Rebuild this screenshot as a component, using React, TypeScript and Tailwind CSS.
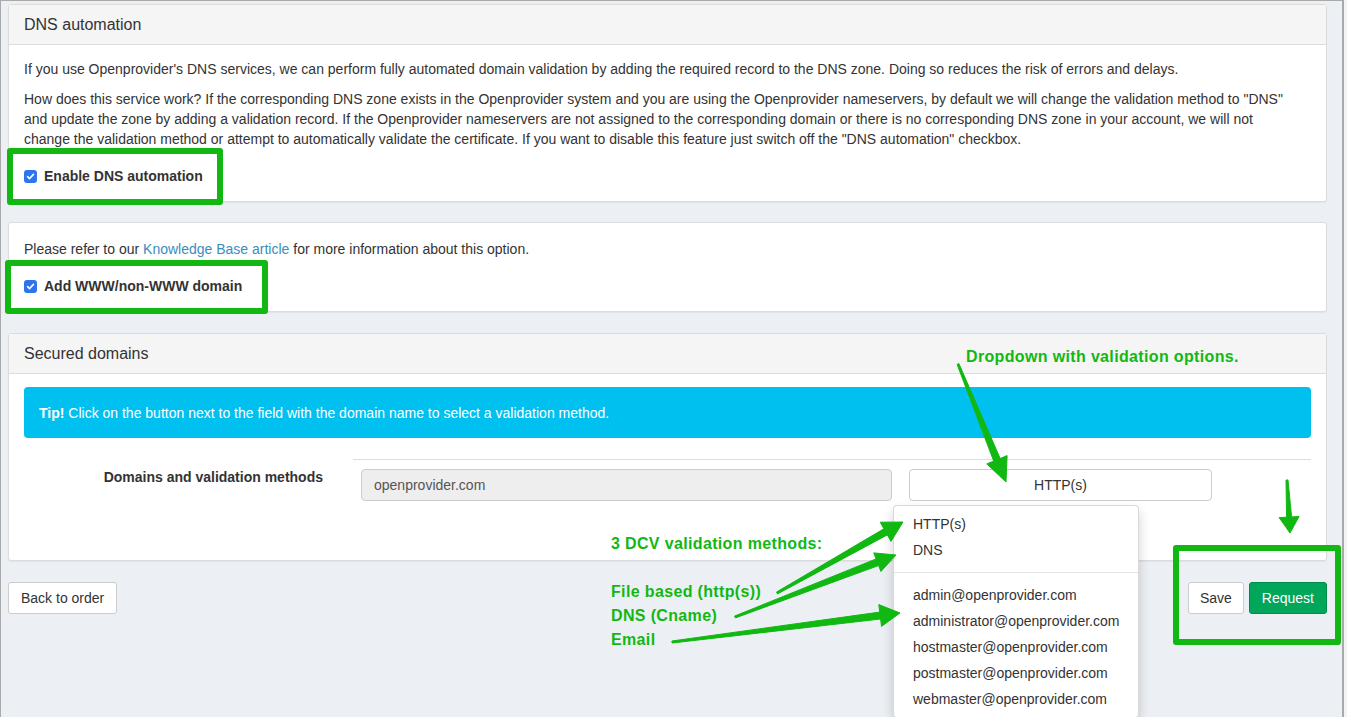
import React from "react";

const GREEN = "#12b812";

function Check() {
  return (
    <span className="inline-flex h-[13px] w-[13px] shrink-0 items-center justify-center rounded-[3px] bg-[#2f74ef]">
      <svg width="9" height="9" viewBox="0 0 10 10" fill="none">
        <path d="M1.8 5.2 L4 7.3 L8.3 2.6" stroke="white" strokeWidth="1.8" strokeLinecap="round" strokeLinejoin="round" />
      </svg>
    </span>
  );
}

type Arrow = { x1: number; y1: number; x2: number; y2: number; len: number; head: number; w1: number; w2: number };

function arrowPoints(a: Arrow) {
  const dx = a.x2 - a.x1;
  const dy = a.y2 - a.y1;
  const d = Math.hypot(dx, dy);
  const ux = dx / d;
  const uy = dy / d;
  const nx = -uy;
  const ny = ux;
  const bx = a.x2 - ux * a.len;
  const by = a.y2 - uy * a.len;
  const p = (x: number, y: number) => `${x.toFixed(1)},${y.toFixed(1)}`;
  return [
    p(a.x1 + (nx * a.w1) / 2, a.y1 + (ny * a.w1) / 2),
    p(bx + (nx * a.w2) / 2, by + (ny * a.w2) / 2),
    p(bx + (nx * a.head) / 2, by + (ny * a.head) / 2),
    p(a.x2, a.y2),
    p(bx - (nx * a.head) / 2, by - (ny * a.head) / 2),
    p(bx - (nx * a.w2) / 2, by - (ny * a.w2) / 2),
    p(a.x1 - (nx * a.w1) / 2, a.y1 - (ny * a.w1) / 2),
  ].join(" ");
}

const arrows: Arrow[] = [
  { x1: 958, y1: 364, x2: 1006, y2: 482, len: 24, head: 22, w1: 2, w2: 7 },
  { x1: 1287, y1: 480, x2: 1290, y2: 533, len: 16, head: 20, w1: 2, w2: 5 },
  { x1: 777, y1: 593, x2: 903, y2: 522, len: 20, head: 22, w1: 2, w2: 7 },
  { x1: 735, y1: 617, x2: 896, y2: 555, len: 20, head: 20, w1: 2, w2: 7 },
  { x1: 672, y1: 642, x2: 900, y2: 613, len: 20, head: 22, w1: 2, w2: 7 },
];

const emails = [
  "admin@openprovider.com",
  "administrator@openprovider.com",
  "hostmaster@openprovider.com",
  "postmaster@openprovider.com",
  "webmaster@openprovider.com",
];

export default function App() {
  return (
    <div className="relative flex h-[717px] w-[1347px] overflow-hidden bg-[#f3f3f3] font-['Liberation_Sans',Arial,sans-serif] text-[14px] leading-[20px] text-[#333]">
      <div className="h-full w-[1344px] border-l border-t border-r-2 border-[#a9a9a9] bg-[#ecf0f5] pl-[7px] pr-[15px] pt-[3px]">
        {/* DNS automation */}
        <div className="rounded-[3px] border border-[#dcdcdc] bg-white shadow-[0_1px_1px_rgba(0,0,0,0.05)]">
          <div className="flex h-[40px] items-center border-b border-[#dddddd] bg-[#f5f5f5] px-[15px] text-[16px]">
            DNS automation
          </div>
          <div className="px-[15px] pb-[15px] pt-[14px]">
            <p>
              If you use Openprovider's DNS services, we can perform fully automated domain validation by adding the
              required record to the DNS zone. Doing so reduces the risk of errors and delays.
            </p>
            <p className="mt-[10px]">
              How does this service work? If the corresponding DNS zone exists in the Openprovider system and you are
              using the Openprovider nameservers, by default we will change the validation method to "DNS"
              <br />
              and update the zone by adding a validation record. If the Openprovider nameservers are not assigned to
              the corresponding domain or there is no corresponding DNS zone in your account, we will not
              <br />
              change the validation method or attempt to automatically validate the certificate. If you want to
              disable this feature just switch off the "DNS automation" checkbox.
            </p>
            <label className="mt-[17px] flex items-center gap-[7px] font-bold">
              <Check />
              Enable DNS automation
            </label>
          </div>
        </div>

        {/* WWW */}
        <div className="mt-[20px] rounded-[3px] border border-[#dcdcdc] bg-white shadow-[0_1px_1px_rgba(0,0,0,0.05)]">
          <div className="px-[15px] pb-[15px] pt-[16px]">
            <p>
              Please refer to our <a className="text-[#3c8dbc]">Knowledge Base article</a> for more information about
              this option.
            </p>
            <label className="mt-[17px] flex items-center gap-[7px] font-bold">
              <Check />
              Add WWW/non-WWW domain
            </label>
          </div>
        </div>

        {/* Secured domains */}
        <div className="mt-[21px] rounded-[3px] border border-[#dcdcdc] bg-white shadow-[0_1px_1px_rgba(0,0,0,0.05)]">
          <div className="flex h-[40px] items-center border-b border-[#dddddd] bg-[#f5f5f5] px-[15px] text-[16px]">
            Secured domains
          </div>
          <div className="px-[15px] pb-[59px] pt-[13px]">
            <div className="flex h-[51px] items-center rounded-[4px] bg-[#00c0ef] px-[15px] text-white">
              <span>
                <b>Tip!</b> Click on the button next to the field with the domain name to select a validation method.
              </span>
            </div>
            <div className="mt-[21px] flex">
              <div className="w-[314px] pr-[15px] pt-[8px] text-right font-bold">Domains and validation methods</div>
              <div className="flex-1 pl-[15px]">
                <div className="border-t border-[#dddddd] pt-[9px]">
                  <div className="flex">
                    <div className="ml-[8px] flex h-[32px] w-[531px] items-center rounded-[4px] border border-[#cccccc] bg-[#eeeeee] px-[12px] text-[#555]">
                      openprovider.com
                    </div>
                    <div className="relative ml-[17px]">
                      <button className="flex h-[32px] w-[303px] items-center justify-center rounded-[4px] border border-[#cccccc] bg-white text-[#333]">
                        HTTP(s)
                      </button>
                      <div className="absolute left-[-16px] top-[36px] z-10 w-[246px] rounded-[4px] border border-[rgba(0,0,0,0.15)] bg-white py-[5px] shadow-[0_6px_12px_rgba(0,0,0,0.175)]">
                        <div className="h-[26px] px-[19px] leading-[26px]">HTTP(s)</div>
                        <div className="h-[26px] px-[19px] leading-[26px]">DNS</div>
                        <div className="my-[9px] h-px bg-[#e5e5e5]" />
                        {emails.map((e) => (
                          <div key={e} className="h-[26px] whitespace-nowrap px-[19px] leading-[26px]">
                            {e}
                          </div>
                        ))}
                      </div>
                    </div>
                  </div>
                </div>
              </div>
            </div>
          </div>
        </div>

        {/* Actions */}
        <div className="mt-[21px] flex items-center justify-between">
          <button className="h-[32px] rounded-[3px] border border-[#cccccc] bg-white px-[12px]">Back to order</button>
          <div className="flex gap-[5px]">
            <button className="h-[32px] rounded-[3px] border border-[#cccccc] bg-white px-[11px]">Save</button>
            <button className="h-[32px] rounded-[3px] border border-[#008d4c] bg-[#00a65a] px-[12px] text-white">
              Request
            </button>
          </div>
        </div>
      </div>

      {/* Annotation overlay */}
      <div className="pointer-events-none absolute inset-0 z-20 text-[16px] font-bold leading-[18px] tracking-[0.35px] text-[#12b812]">
        <div className="absolute left-[7px] top-[148px] h-[57px] w-[216px] rounded-[3px] border-[6px] border-[#12b812]" />
        <div className="absolute left-[5px] top-[260px] h-[54px] w-[263px] rounded-[3px] border-[6px] border-[#12b812]" />
        <div className="absolute left-[1173px] top-[545px] h-[100px] w-[168px] rounded-[3px] border-[6px] border-[#12b812]" />

        <div className="absolute left-[966px] top-[348px] whitespace-nowrap">Dropdown with validation options.</div>
        <div className="absolute left-[611px] top-[535px] whitespace-nowrap">3 DCV validation methods:</div>
        <div className="absolute left-[611px] top-[580px] whitespace-nowrap leading-[24px]">
          File based (http(s))
          <br />
          DNS (Cname)
          <br />
          Email
        </div>

        <svg className="absolute inset-0" width="1347" height="717">
          {arrows.map((a, i) => (
            <polygon key={i} points={arrowPoints(a)} fill={GREEN} strokeLinejoin="round" stroke={GREEN} strokeWidth="1" />
          ))}
        </svg>
      </div>
    </div>
  );
}
